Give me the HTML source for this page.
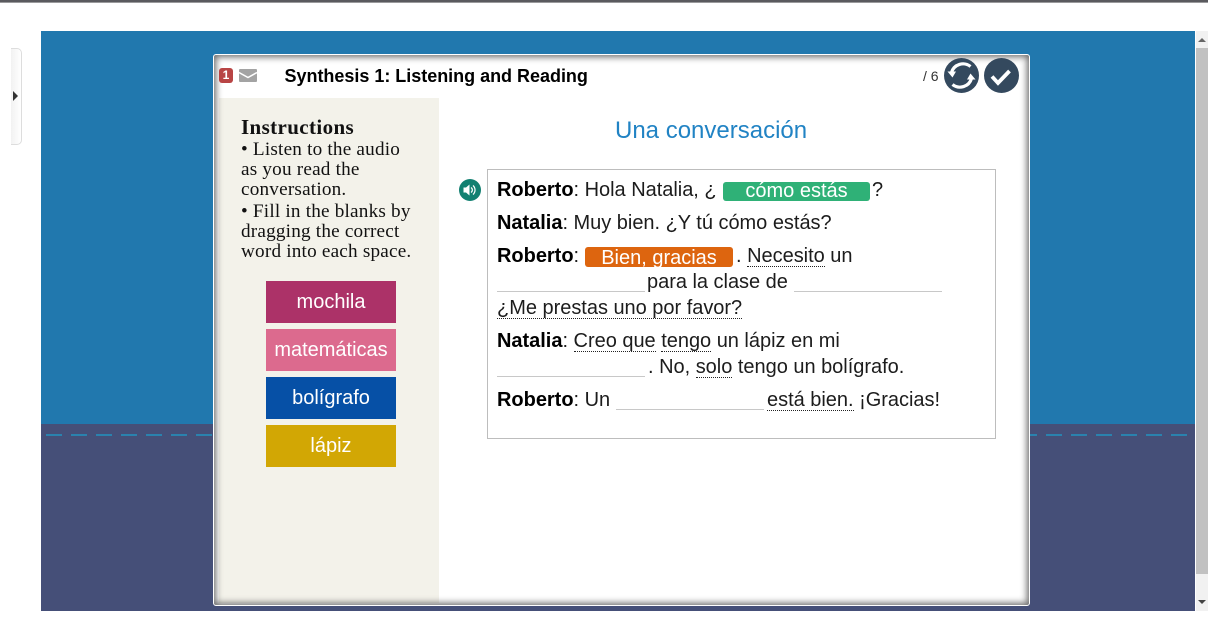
<!DOCTYPE html>
<html><head><meta charset="utf-8"><style>
html,body{margin:0;padding:0;width:1208px;height:624px;overflow:hidden;background:#fff}
body{position:relative;font-family:"Liberation Sans",Arial,sans-serif;color:#111}
.a{position:absolute}
.t{position:absolute;font-size:20px;line-height:24px;white-space:nowrap;color:#1c1c1c;letter-spacing:-.02px}
.t b{color:#000}
.u{border-bottom:1px dotted #222;line-height:20px;display:inline-block}
.ln{position:absolute;height:1px;background:#c8c8c8}
.i{position:absolute;font-family:"Liberation Serif",serif;font-size:19.2px;line-height:20px;white-space:nowrap;color:#111;letter-spacing:.2px}
.w{position:absolute;left:266px;width:130px;height:42px;line-height:43px;text-align:center;color:#fff;font-size:20px}
.pill{position:absolute;border-radius:3px;color:#fff;font-size:20px;text-align:center}
</style></head><body>
<div class="a" style="left:0;top:0;width:1208px;height:2px;background:#5a5a5e"></div>
<div class="a" style="left:0;top:2px;width:1208px;height:1px;background:#9a9a9c"></div>
<div class="a" style="left:11px;top:48px;width:11px;height:97px;box-sizing:border-box;border:1px solid #ddd;border-left:0;border-radius:0 5px 5px 0;background:linear-gradient(90deg,#f2f2f2,#fff)"></div>
<div class="a" style="left:13px;top:91px;width:0;height:0;border-left:5px solid #333;border-top:5px solid transparent;border-bottom:5px solid transparent"></div>
<div class="a" style="left:41px;top:31px;width:1154px;height:393px;background:#2178ae"></div>
<div class="a" style="left:41px;top:424px;width:1154px;height:187px;background:#454f78"></div>
<div class="a" style="left:46px;top:434px;width:1142px;height:2px;background:repeating-linear-gradient(90deg,#2a82ae 0 16px,transparent 16px 25px)"></div>
<div class="a" style="left:1196px;top:31px;width:12px;height:580px;background:#f1f1f1"></div>
<div class="a" style="left:1196px;top:48px;width:12px;height:526px;background:#c1c1c1"></div>
<div class="a" style="left:1198px;top:38px;border-left:4px solid transparent;border-right:4px solid transparent;border-bottom:4px solid #666"></div>
<div class="a" style="left:1198px;top:600px;border-left:4px solid transparent;border-right:4px solid transparent;border-top:4px solid #444"></div>

<div class="a" style="left:213px;top:54px;width:817px;height:552px;box-sizing:border-box;background:#fff;border:1px solid #fff;border-radius:3px"></div>
<div class="a" style="left:219px;top:98px;width:220px;height:505px;background:#f3f2ea"></div>
<div class="a" style="left:214px;top:55px;width:815px;height:550px;box-sizing:border-box;border-radius:2px;box-shadow:inset 0 0 7px 2px rgba(70,70,70,.8)"></div>

<div class="a" style="left:219px;top:68px;width:14px;height:15px;background:#b84444;border-radius:3px;color:#fff;font-size:12px;font-weight:bold;line-height:15px;text-align:center">1</div>
<svg class="a" style="left:239px;top:69px" width="18" height="13" viewBox="0 0 18 13"><rect width="18" height="13" rx="1" fill="#a3a3a3"/><path d="M0 3.500l9 5 9-5" fill="none" stroke="#fff" stroke-width="1.500"/></svg>
<div class="a" style="left:284.500px;top:65px;font-size:18px;line-height:22px;font-weight:bold;color:#000;white-space:nowrap;letter-spacing:-.02px">Synthesis 1: Listening and Reading</div>
<div class="a" style="left:923px;top:68px;font-size:14px;line-height:16px;color:#333">/ 6</div>
<svg class="a" style="left:944px;top:58px" width="35" height="35" viewBox="0 0 35 35"><circle cx="17.500" cy="17.500" r="17.500" fill="#34495e"/><path d="M26.500 8.500A12 12 0 0 0 7.500 14.500" fill="none" stroke="#fff" stroke-width="3.200"/><path d="M8.500 26.500A12 12 0 0 0 27.500 20.500" fill="none" stroke="#fff" stroke-width="3.200"/><path d="M3.500 13.500h8.500l-3.500 6zM31.500 21.500h-8.500l3.500-6z" fill="#fff"/></svg>
<svg class="a" style="left:984px;top:58px" width="35" height="35" viewBox="0 0 35 35"><circle cx="17.500" cy="17.500" r="17.500" fill="#34495e"/><path d="M8 18.500l6 6.500L25.500 13" fill="none" stroke="#fff" stroke-width="3.800"/></svg>

<div class="i" style="left:241px;top:117px;font-weight:bold;font-size:21px;letter-spacing:.38px">Instructions</div>
<div class="i" style="left:241px;top:140px">• Listen to the audio</div>
<div class="i" style="left:241px;top:160px">as you read the</div>
<div class="i" style="left:241px;top:180px">conversation.</div>
<div class="i" style="left:241px;top:202px">• Fill in the blanks by</div>
<div class="i" style="left:241px;top:222px">dragging the correct</div>
<div class="i" style="left:241px;top:242px">word into each space.</div>

<div class="w" style="top:281px;background:#ac3268">mochila</div>
<div class="w" style="top:329px;background:#dc6a8e">matemáticas</div>
<div class="w" style="top:377px;background:#0650a6">bolígrafo</div>
<div class="w" style="top:425px;background:#d2a704">lápiz</div>

<div class="a" style="left:615px;top:116px;font-size:24px;line-height:30px;color:#2183c4;white-space:nowrap">Una conversación</div>
<svg class="a" style="left:459px;top:179px" width="22" height="22" viewBox="0 0 22 22"><circle cx="11" cy="11" r="11" fill="#128071"/><path d="M4.500 8.500h2.500l3.500-3v11l-3.500-3H4.500z" fill="#fff"/><path d="M12 8.500a3 3 0 0 1 0 5M14 6.500a6 6 0 0 1 0 9" fill="none" stroke="#fff" stroke-width="1.200"/></svg>
<div class="a" style="left:487px;top:169px;width:509px;height:270px;box-sizing:border-box;border:1px solid #bdbdbd"></div>

<div class="t" style="left:497px;top:178px"><b>Roberto</b>: Hola Natalia, ¿</div>
<div class="pill" style="left:723px;top:182px;width:147px;height:19px;line-height:19px;background:#2fb177">cómo estás</div>
<div class="t" style="left:872px;top:178px">?</div>
<div class="t" style="left:497px;top:211px"><b>Natalia</b>: Muy bien. ¿Y tú cómo estás?</div>
<div class="t" style="left:497px;top:244px"><b>Roberto</b>:</div>
<div class="pill" style="left:585px;top:247px;width:148px;height:20px;line-height:22px;background:#dd650f">Bien, gracias</div>
<div class="t" style="left:736px;top:244px">. <span class="u">Necesito</span> un</div>
<div class="ln" style="left:497px;top:291px;width:148px"></div>
<div class="t" style="left:647px;top:270px">para la clase de</div>
<div class="ln" style="left:794px;top:291px;width:148px"></div>
<div class="t" style="left:497px;top:296px"><span class="u">¿Me prestas uno por favor?</span></div>
<div class="t" style="left:497px;top:329px"><b>Natalia</b>: <span class="u">Creo que</span> <span class="u">tengo</span> un lápiz en mi</div>
<div class="ln" style="left:497px;top:376px;width:148px"></div>
<div class="t" style="left:648px;top:355px">. No, <span class="u">solo</span> tengo un bolígrafo.</div>
<div class="t" style="left:497px;top:388px"><b>Roberto</b>: Un</div>
<div class="ln" style="left:616px;top:409px;width:148px"></div>
<div class="t" style="left:767px;top:388px"><span class="u">está bien.</span> ¡Gracias!</div>
</body></html>
